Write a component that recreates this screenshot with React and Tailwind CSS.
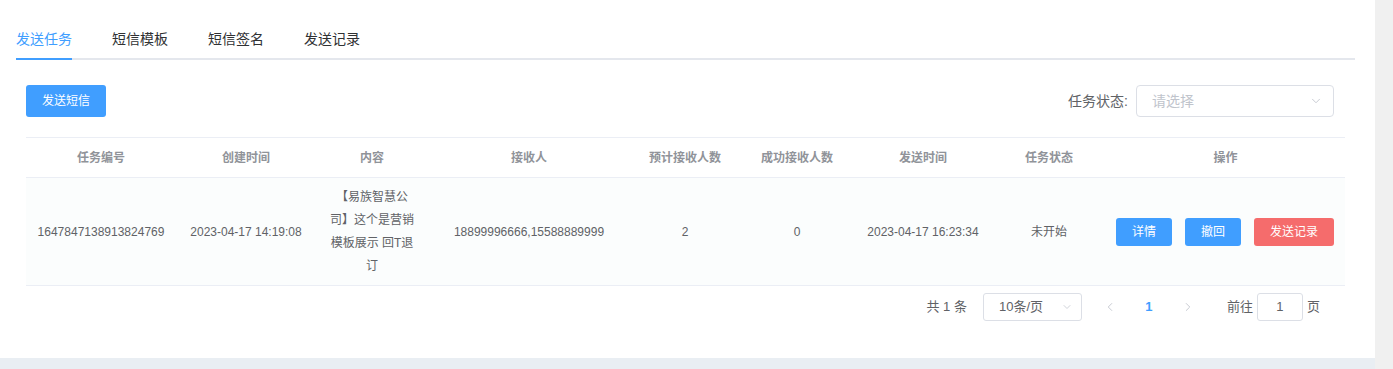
import { ChevronDown, ChevronLeft, ChevronRight } from 'lucide-react'

const TABS = ['发送任务', '短信模板', '短信签名', '发送记录']

const COLUMNS = [
  { label: '任务编号', width: 150 },
  { label: '创建时间', width: 140 },
  { label: '内容', width: 112 },
  { label: '接收人', width: 202 },
  { label: '预计接收人数', width: 110 },
  { label: '成功接收人数', width: 114 },
  { label: '发送时间', width: 138 },
  { label: '任务状态', width: 114 },
  { label: '操作', width: 239 },
]

const FONT = "font-['Liberation_Sans','Noto_Sans_CJK_SC',sans-serif]"

export default function App() {
  return (
    <div className={`flex w-[1393px] h-[369px] overflow-hidden bg-[#f0f0f0] ${FONT}`}>
      <div className="flex flex-col w-[1375px]">
        <div className="h-[358px] bg-white pl-4 pr-5 pt-5">
          {/* Tabs */}
          <div className="flex h-[40px] border-b-2 border-[#e4e7ed]">
            {TABS.map((t, i) => (
              <div
                key={t}
                className={`relative flex items-center text-[14px] ${i === 0 ? 'pr-5 text-[#409eff]' : 'px-5 text-[#303133]'} ${i === TABS.length - 1 ? 'pr-0' : ''}`}
              >
                {t}
                {i === 0 && <span className="absolute left-0 right-5 -bottom-[2px] h-[2px] bg-[#409eff]" />}
              </div>
            ))}
          </div>

          <div className="px-[10px]">
            {/* Toolbar */}
            <div className="flex items-center justify-between mt-[25px]">
              <button className="h-[32px] w-[80px] rounded-[3px] bg-[#409eff] text-white text-[12px]">发送短信</button>
              <div className="flex items-center mr-[11px]">
                <span className="text-[14px] text-[#606266] mr-2">任务状态:</span>
                <div className="flex items-center justify-between w-[198px] h-[32px] border border-[#dcdfe6] rounded-[4px] pl-[15px] pr-[10px]">
                  <span className="text-[14px] text-[#c0c4cc]">请选择</span>
                  <ChevronDown className="w-[14px] h-[14px] text-[#c0c4cc]" strokeWidth={1.5} />
                </div>
              </div>
            </div>

            {/* Table */}
            <table className="mt-5 w-[1319px] table-fixed border-collapse text-[12px]">
              <colgroup>
                {COLUMNS.map(c => <col key={c.label} style={{ width: c.width }} />)}
              </colgroup>
              <thead>
                <tr className="h-[40px] border-y border-[#ebeef5]">
                  {COLUMNS.map(c => (
                    <th key={c.label} className="font-bold text-[#909399] text-center">{c.label}</th>
                  ))}
                </tr>
              </thead>
              <tbody>
                <tr className="h-[108px] bg-[#fbfdfd] border-b border-[#ebeef5] text-[#606266] text-center">
                  <td>1647847138913824769</td>
                  <td>2023-04-17 14:19:08</td>
                  <td className="leading-[23px]">
                    【易族智慧公<br />司】这个是营销<br />模板展示 回T退<br />订
                  </td>
                  <td>18899996666,15588889999</td>
                  <td>2</td>
                  <td>0</td>
                  <td>2023-04-17 16:23:34</td>
                  <td>未开始</td>
                  <td>
                    <div className="flex items-center justify-end gap-[13px] pr-[11px]">
                      <button className="w-[56px] h-[28px] rounded-[3px] bg-[#409eff] text-white text-[12px]">详情</button>
                      <button className="w-[56px] h-[28px] rounded-[3px] bg-[#409eff] text-white text-[12px]">撤回</button>
                      <button className="w-[80px] h-[28px] rounded-[3px] bg-[#f56c6c] text-white text-[12px]">发送记录</button>
                    </div>
                  </td>
                </tr>
              </tbody>
            </table>

            {/* Pagination */}
            <div className="flex items-center justify-end mt-[7px] pr-[25px] h-[28px] text-[13px] text-[#606266]">
              <span className="mr-4">共 1 条</span>
              <div className="flex items-center justify-between w-[99px] h-[28px] border border-[#dcdfe6] rounded-[3px] pl-[15px] pr-[8px]">
                <span>10条/页</span>
                <ChevronDown className="w-[12px] h-[12px] text-[#c0c4cc]" strokeWidth={1.5} />
              </div>
              <div className="flex items-center ml-[14px]">
                <div className="w-[28px] flex justify-center"><ChevronLeft className="w-[14px] h-[14px] text-[#c0c4cc]" strokeWidth={1.5} /></div>
                <div className="w-[50px] text-center text-[#409eff] font-bold">1</div>
                <div className="w-[28px] flex justify-center"><ChevronRight className="w-[14px] h-[14px] text-[#c0c4cc]" strokeWidth={1.5} /></div>
              </div>
              <span className="ml-[25px]">前往</span>
              <div className="flex items-center justify-center w-[46px] h-[28px] mx-[4px] border border-[#dcdfe6] rounded-[3px]">1</div>
              <span>页</span>
            </div>
          </div>
        </div>
        <div className="flex-1 bg-[#e9eef3]" />
      </div>
      <div className="flex-1 bg-[#f0f0f0]" />
    </div>
  )
}
